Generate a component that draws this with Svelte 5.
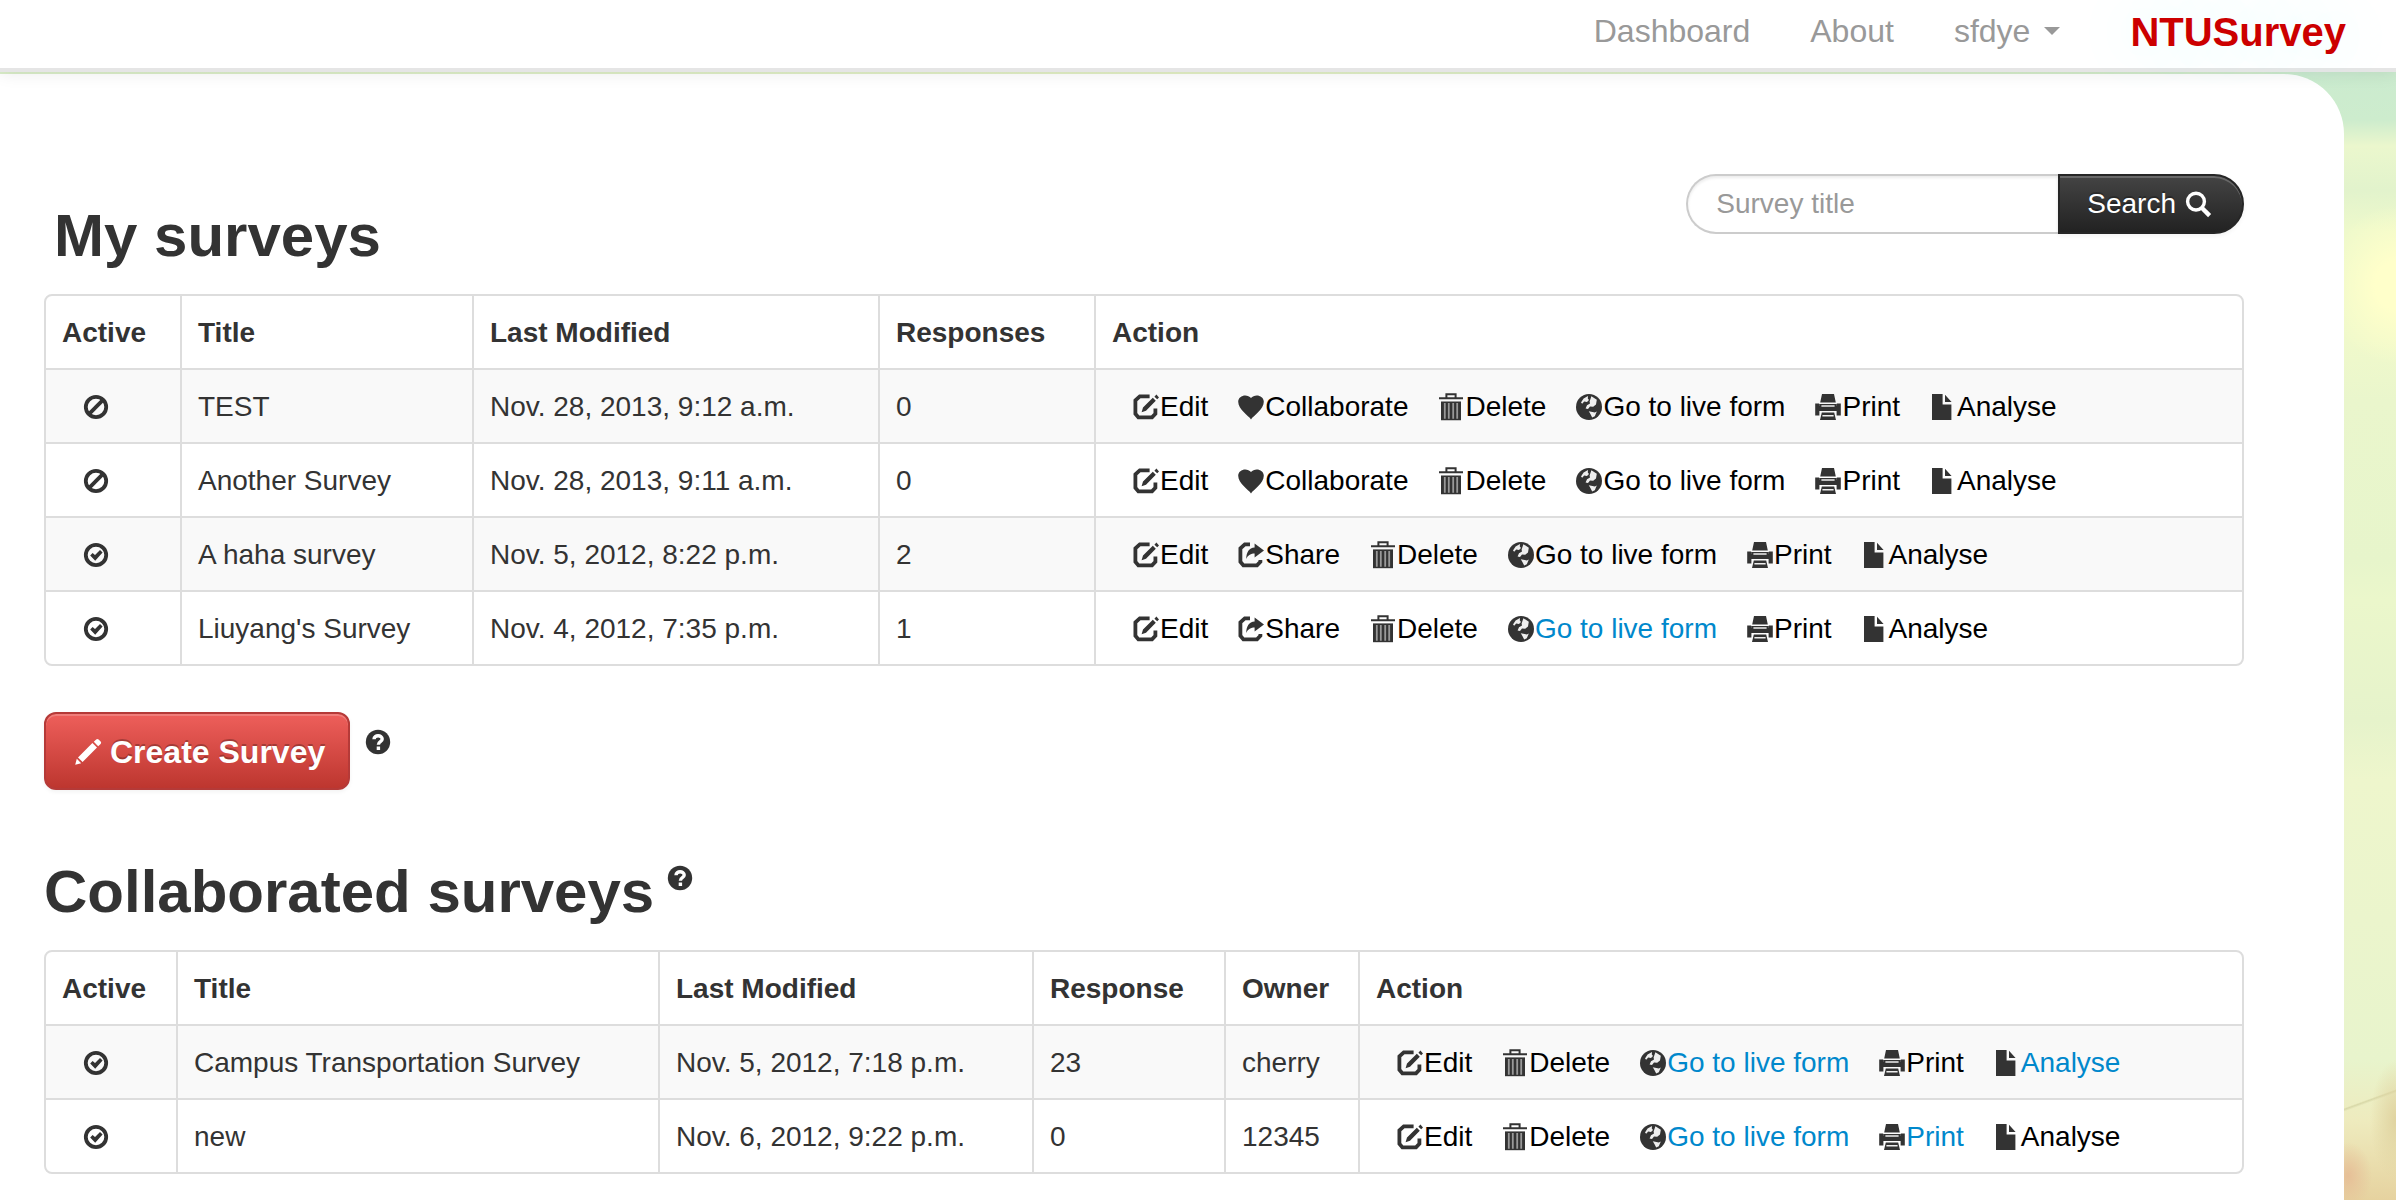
<script>
  const my = [
    { on: false, title: 'TEST', date: 'Nov. 28, 2013, 9:12 a.m.', n: '0', second: 'Collaborate', seen: [] },
    { on: false, title: 'Another Survey', date: 'Nov. 28, 2013, 9:11 a.m.', n: '0', second: 'Collaborate', seen: [] },
    { on: true, title: 'A haha survey', date: 'Nov. 5, 2012, 8:22 p.m.', n: '2', second: 'Share', seen: [] },
    { on: true, title: "Liuyang's Survey", date: 'Nov. 4, 2012, 7:35 p.m.', n: '1', second: 'Share', seen: ['Go to live form'] },
  ];
  const shared = [
    { on: true, title: 'Campus Transportation Survey', date: 'Nov. 5, 2012, 7:18 p.m.', n: '23', owner: 'cherry', seen: ['Go to live form', 'Analyse'] },
    { on: true, title: 'new', date: 'Nov. 6, 2012, 9:22 p.m.', n: '0', owner: '12345', seen: ['Go to live form', 'Print'] },
  ];
  const actions = (row) => ['Edit', ...(row.second ? [row.second] : []), 'Delete', 'Go to live form', 'Print', 'Analyse'];
</script>

{#snippet icon(name)}
  <svg class="icon" viewBox="0 0 14 14" aria-hidden="true">
    {#if name === 'Edit'}
      <path d="M8.800 1.700H3.900L1.700 3.700v6.700l1.500 1.800h6.800l1.700-1.800V7.800" fill="none" stroke="currentColor" stroke-width="1.900" />
      <path d="M4.800 9.600l.7-2.300 4.900-4.900 1.500 1.500L7 8.900zM11.200 1.900l1-1.100 1.300 1.400-.9.900z" fill="currentColor" />
    {:else if name === 'Collaborate'}
      <path d="M7 13.200C5.800 11.400.6 8.200.6 4.400.6 1 5.200.2 7 2.500 8.800.2 13.400 1 13.400 4.400 13.400 8.200 8.200 11.400 7 13.200z" fill="currentColor" />
    {:else if name === 'Share'}
      <path d="M6.500 1.700H3.900L1.700 3.700v6.700l1.500 1.800h6.800l1.700-1.800V9.500" fill="none" stroke="currentColor" stroke-width="1.900" />
      <path d="M8.800 1.200l4.700 3.500-4.700 3.500V6.300C7 6.300 5.600 7 4.600 9 4.700 5.500 6 3.300 8.800 3.200z" fill="currentColor" />
    {:else if name === 'Delete'}
      <path d="M4.700 2.200V.6h4.600v1.600M1 2.600h12" fill="none" stroke="currentColor" stroke-width="1" />
      <path d="M2 4.200h10v9.400H2z" fill="currentColor" />
      <path d="M3.900 5v7.900M5.900 5v7.900M8.100 5v7.900M10.100 5v7.900" stroke="#999" stroke-width=".9" />
    {:else if name === 'Go to live form'}
      <circle cx="7" cy="7" r="6.500" fill="currentColor" />
      <path d="M6.500 1.500L4.300 2.700 3 4.800l.6.600 1-1.100 1.400.2 1-1-.6-.8zM8.200 1.600l2.700 1.800-.4 2.300-1.400 1.200-1.600-.1-1 1.200-1.200-.2.700-1.700 1.500-.8-.2-1.100zM6.900 9.100l3 .6 1-.5-1 2.400-1.300.7-.9-1.800z" fill="#eee" />
    {:else if name === 'Print'}
      <path d="M4 .5h6l.9 4.200H3.100zM.6 5.200h2v1.300h8.800V5.200h2v6h-2.100V9H2.700v2.200H.6zM3.900 9.800h6.200l.9 3.700H3z" fill="currentColor" />
      <path d="M2.600 5.500h8.800v2H2.600z" fill="currentColor" />
      <path d="M3.700 6.500h6.600M4.200 11.400h5.600" stroke="#eee" stroke-width=".7" />
    {:else if name === 'Analyse'}
      <path d="M1.500.5h5.300v5.300h4.400v7.700H1.500zM8 .9l3.300 3.600H8z" fill="currentColor" />
    {:else if name === 'on'}
      <circle cx="7" cy="7" r="5.100" fill="none" stroke="currentColor" stroke-width="1.900" />
      <path d="M4.100 7.200l1.200-1.200 1.200 1L9 4.500l1.300 1.200-3.700 4.200z" fill="currentColor" />
    {:else if name === 'off'}
      <circle cx="7" cy="7" r="5.100" fill="none" stroke="currentColor" stroke-width="1.900" />
      <path d="M3.600 10.400l6.800-6.800" stroke="currentColor" stroke-width="1.900" />
    {:else if name === 'help'}
      <circle cx="7" cy="7" r="6.100" fill="currentColor" />
      <path d="M5 5.600c0-2.300 4.100-2.300 4.100-.1C9.100 7 7.200 6.700 7.200 8.400M7.200 9.300v1.700" fill="none" stroke="#fff" stroke-width="1.700" />
    {:else if name === 'search'}
      <circle cx="6" cy="5.800" r="4.200" fill="none" stroke="currentColor" stroke-width="1.700" />
      <path d="M9 9l3.800 3.800" stroke="currentColor" stroke-width="2.200" />
    {:else if name === 'pencil'}
      <path d="M.6 13.400l.8-3 2.200 2.200zM2 9.700l7.200-7.200 2.300 2.300L4.300 12zM9.900 1.900L11.100.7q.6-.4 1.200.1l1 1q.5.600 0 1.200l-1.200 1.100z" fill="currentColor" />
    {/if}
  </svg>
{/snippet}

{#snippet actionCell(row)}
  <td>
    <div class="actions">
      {#each actions(row) as a}
        <a href="#top" class:seen={row.seen.includes(a)}>{@render icon(a)}{a}</a>
      {/each}
    </div>
  </td>
{/snippet}

<div class="page" id="top">
  <header>
    <nav>
      <a href="#top">Dashboard</a>
      <a href="#top">About</a>
      <a href="#top" class="user">sfdye <span class="caret"></span></a>
    </nav>
    <a class="brand" href="#top">NTUSurvey</a>
  </header>

  <main>
    <div class="top">
      <h1>My surveys</h1>
      <form>
        <input type="text" placeholder="Survey title" aria-label="Survey title" />
        <button type="button" class="search">Search {@render icon('search')}</button>
      </form>
    </div>

    <table class="mine">
      <colgroup><col class="c1" /><col class="c2" /><col class="c3" /><col class="c4" /><col /></colgroup>
      <thead><tr><th>Active</th><th>Title</th><th>Last Modified</th><th>Responses</th><th>Action</th></tr></thead>
      <tbody>
        {#each my as row}
          <tr>
            <td><span class="state">{@render icon(row.on ? 'on' : 'off')}</span></td>
            <td>{row.title}</td><td>{row.date}</td><td>{row.n}</td>
            {@render actionCell(row)}
          </tr>
        {/each}
      </tbody>
    </table>

    <div class="create-row">
      <button type="button" class="create">{@render icon('pencil')}Create Survey</button>
      <span class="help">{@render icon('help')}</span>
    </div>

    <div class="second">
      <h1>Collaborated surveys</h1>
      <span class="help">{@render icon('help')}</span>
    </div>

    <table class="shared">
      <colgroup><col class="c1" /><col class="c2" /><col class="c3" /><col class="c4" /><col class="c5" /><col /></colgroup>
      <thead><tr><th>Active</th><th>Title</th><th>Last Modified</th><th>Response</th><th>Owner</th><th>Action</th></tr></thead>
      <tbody>
        {#each shared as row}
          <tr>
            <td><span class="state">{@render icon(row.on ? 'on' : 'off')}</span></td>
            <td>{row.title}</td><td>{row.date}</td><td>{row.n}</td><td>{row.owner}</td>
            {@render actionCell(row)}
          </tr>
        {/each}
      </tbody>
    </table>
  </main>
</div>

<style>
  :global(body) { margin: 0; }
  .page {
    box-sizing: border-box;
    display: flex;
    flex-direction: column;
    min-height: 100vh;
    font: 28px/40px "Liberation Sans", Arial, sans-serif;
    color: #333;
    background:
      radial-gradient(ellipse 24px 34px at calc(100% - 48px) 1176px, #e6bf97, transparent),
      radial-gradient(ellipse 26px 60px at 100% 1120px, #e0d3a0, transparent),
      linear-gradient(160deg, transparent 48%, #d8d8a8 50%, transparent 53%) 100% 1070px / 52px 60px no-repeat,
      radial-gradient(ellipse 70px 80px at 100% 285px, #ffffca 30%, transparent),
      linear-gradient(90deg, #d9edc8, #e2efc4 50%, #d0ebca 94%, transparent 96%) 0 72px / 100% 2px no-repeat,
      linear-gradient(#cbebcf 72px, #cdeccd 120px, #ebf7cd 146px, #e2f3cc 190px, #eef9cb 230px, #f0f9cb 340px, #eaf6cc 400px, #e7f5cb 560px, #ebf7cb 600px, #e6f3cb 720px, #eef6cc 780px, #e8f4cc 1060px, #eeebbe 1120px, #e6d29f 1200px);
  }
  header {
    position: relative;
    z-index: 1;
    display: flex;
    justify-content: flex-end;
    align-items: center;
    gap: 70px;
    box-sizing: border-box;
    height: 72px;
    padding: 0 50px 6px 0;
    background: #fff;
    border-bottom: 4px solid #e5e5e5;
    box-shadow: 0 2px 16px rgba(0, 0, 0, .08);
    font-size: 32px;
  }
  nav { display: flex; gap: 60px; }
  a { text-decoration: none; }
  nav a { color: #999; }
  .user { display: flex; align-items: center; gap: 14px; }
  .caret { border: 8px solid transparent; border-top-color: #999; border-bottom: 0; }
  .brand {
    color: #c00;
    font-size: 40px;
    font-weight: bold;
    padding-top: 2px;
    text-shadow: 0 0 60px #cff;
  }
  main {
    flex: 1;
    margin: 2px 52px 0 0;
    padding: 100px 100px 26px 44px;
    background: #fff;
    border-top-right-radius: 60px;
  }
  .top { display: flex; justify-content: space-between; height: 120px; }
  h1 { margin: 0; font-size: 60px; line-height: 80px; }
  .top h1 { padding: 22px 10px; }
  form { display: flex; height: 60px; }
  input, button { box-sizing: border-box; font: inherit; margin: 0; }
  input {
    width: 372px;
    padding: 0 28px;
    color: #333;
    border: 2px solid #ccc;
    border-right: 0;
    border-radius: 30px 0 0 30px;
    box-shadow: inset 0 2px 3px rgba(0, 0, 0, .08);
  }
  input::placeholder { color: #999; opacity: 1; }
  .search {
    display: flex;
    align-items: center;
    gap: 8px;
    padding: 0 30px 0 27px;
    color: #fff;
    border: 2px solid #262626;
    border-radius: 0 30px 30px 0;
    background: linear-gradient(#444, #222);
    box-shadow: inset 0 2px 0 rgba(255, 255, 255, .2), 0 2px 4px rgba(0, 0, 0, .05);
    text-shadow: 0 -2px 0 rgba(0, 0, 0, .25);
  }
  .icon { flex: none; display: block; width: 28px; height: 28px; }
  table {
    width: 100%;
    table-layout: fixed;
    border: 2px solid #ddd;
    border-radius: 8px;
    border-collapse: separate;
    border-spacing: 0;
    overflow: hidden;
  }
  th, td { padding: 17px 16px 15px; text-align: left; white-space: nowrap; }
  th + th, td + td { border-left: 2px solid #ddd; }
  td { border-top: 2px solid #ddd; }
  tbody tr:nth-child(odd) { background: #f9f9f9; }
  .mine .c1 { width: 134px; }
  .mine .c2 { width: 292px; }
  .mine .c3 { width: 406px; }
  .mine .c4 { width: 216px; }
  .shared .c1 { width: 130px; }
  .shared .c2 { width: 482px; }
  .shared .c3 { width: 374px; }
  .shared .c4 { width: 192px; }
  .shared .c5 { width: 134px; }
  .state { display: block; padding-left: 20px; }
  .actions { display: flex; gap: 29px; padding-left: 20px; }
  .actions a { display: flex; align-items: center; color: #000; }
  .actions a.seen { color: #08c; }
  .actions .icon, .state, .help { color: #333; }
  .create-row { display: flex; gap: 14px; padding-top: 46px; }
  .create {
    display: flex;
    align-items: center;
    gap: 8px;
    height: 78px;
    padding: 2px 23px 0 28px;
    color: #fff;
    font-size: 32px;
    font-weight: bold;
    border: 2px solid #b53a38;
    border-radius: 12px;
    background: linear-gradient(#ee5f5b, #bd362f);
    box-shadow: inset 0 2px 0 rgba(255, 255, 255, .2), 0 2px 4px rgba(0, 0, 0, .05);
    text-shadow: 0 -2px 0 rgba(0, 0, 0, .25);
  }
  .create-row .help { padding-top: 16px; }
  .second { display: flex; gap: 12px; padding: 62px 0 18px; }
  .second .help { padding-top: 12px; }
</style>
